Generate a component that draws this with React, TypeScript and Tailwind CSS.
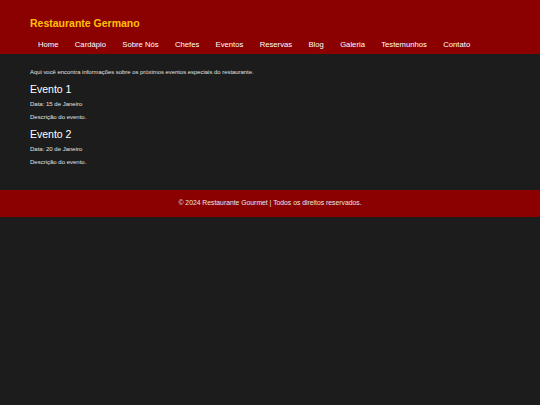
const navItems = ['Home', 'Cardápio', 'Sobre Nós', 'Chefes', 'Eventos', 'Reservas', 'Blog', 'Galeria', 'Testemunhos', 'Contato'];

const eventos = [
  { titulo: 'Evento 1', data: '15 de Janeiro' },
  { titulo: 'Evento 2', data: '20 de Janeiro' },
];

export default function App() {
  return (
    <div className="min-h-[405px] bg-[#1c1c1c] text-[#e0e0e0] font-['Liberation_Sans',Arial,sans-serif]">
      <header className="bg-[#8b0000] px-[30px] pt-[16px] pb-[3px]">
        <h1 className="text-[10.5px] font-bold leading-[14px] text-[#ffc107]">Restaurante Germano</h1>
        <nav className="mt-[9px] flex pl-[8px]">
          {navItems.map((item) => (
            <a key={item} href="#" className="mr-[16.3px] text-[7.7px] leading-[12px] text-white">
              {item}
            </a>
          ))}
        </nav>
      </header>
      <main className="px-[30px] pt-[14px] pb-[24px]">
        <p className="text-[5.9px] leading-[8px]">
          Aqui você encontra informações sobre os próximos eventos especiais do restaurante.
        </p>
        {eventos.map((ev) => (
          <section key={ev.titulo} className="mt-[6px]">
            <h2 className="text-[10.5px] leading-[14px] text-white">{ev.titulo}</h2>
            <p className="mt-[4px] text-[6px] leading-[8px]">Data: {ev.data}</p>
            <p className="mt-[5px] text-[6px] leading-[8px]">Descrição do evento.</p>
          </section>
        ))}
      </main>
      <footer className="flex h-[27px] items-center justify-center bg-[#8b0000] text-[6.8px] text-[#e8e8e8]">
        © 2024 Restaurante Gourmet | Todos os direitos reservados.
      </footer>
    </div>
  );
}
